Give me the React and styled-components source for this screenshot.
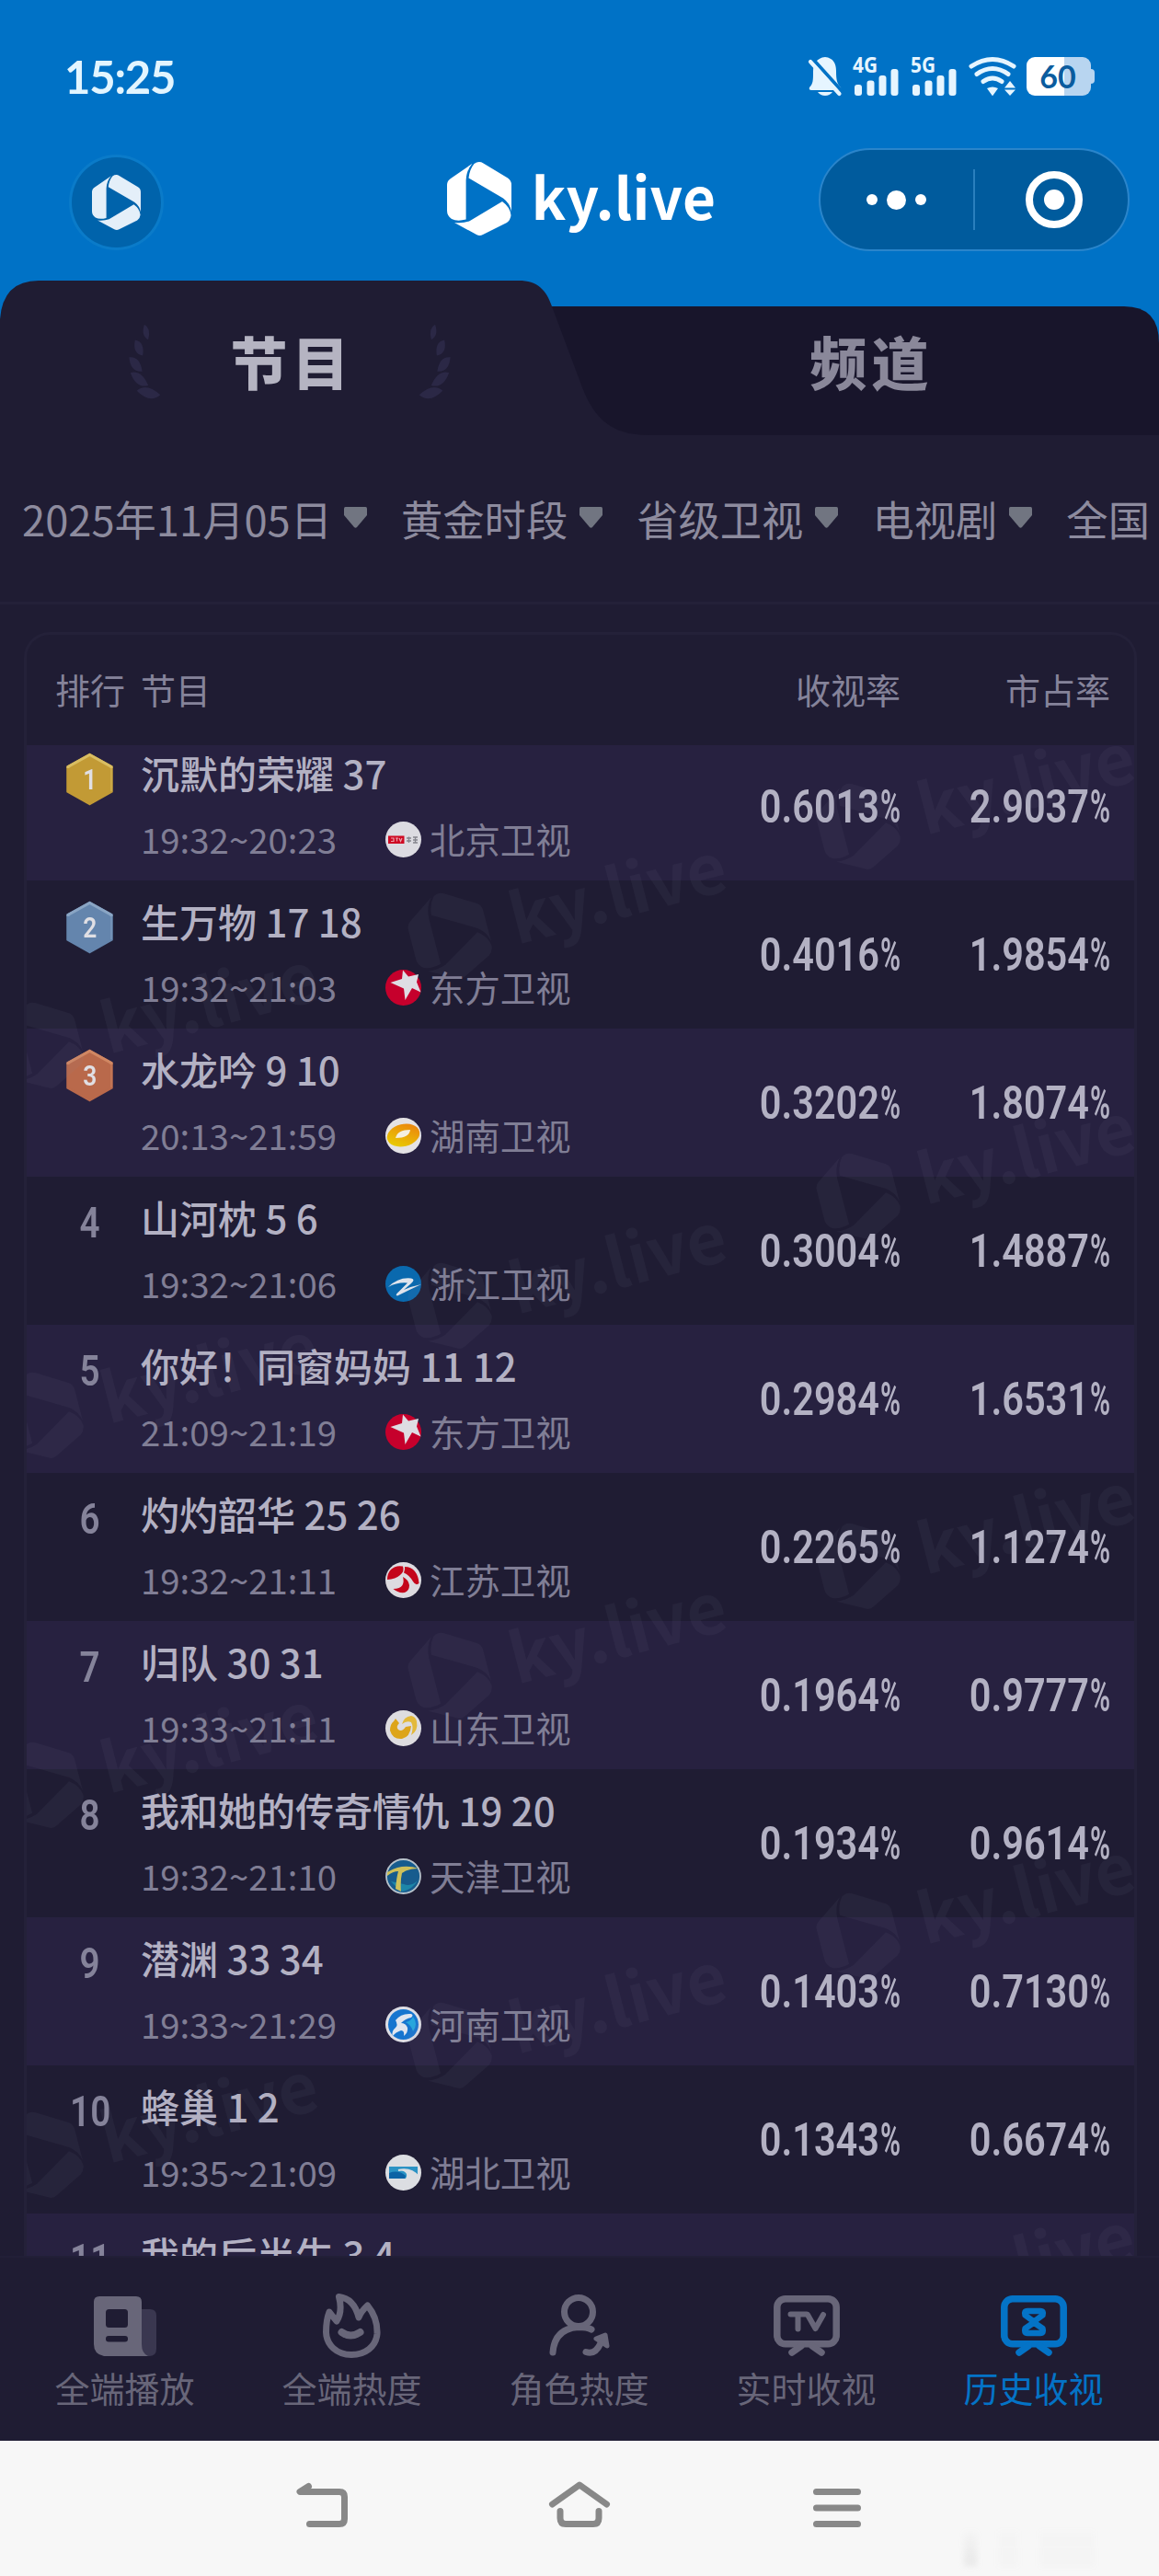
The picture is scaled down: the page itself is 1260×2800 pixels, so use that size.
import React from "react";
import styled, { createGlobalStyle } from "styled-components";

const CJK = `"Noto Sans CJK SC", "Noto Sans", sans-serif`;

const GlobalStyle = createGlobalStyle`
  body { margin: 0; background: #1f1c33; }
  * { box-sizing: border-box; }
  svg { display: block; flex: none; overflow: visible; }
`;

const Screen = styled.div`
  width: 1260px;
  height: 2800px;
  display: flex;
  flex-direction: column;
  overflow: hidden;
  background: #1f1c33;
  font-family: ${CJK};
  color: #8b899c;
`;

/* ---------- top area ---------- */

const Top = styled.header`
  height: 305px;
  flex: none;
  background: #0072c6;
  display: flex;
  flex-direction: column;
`;

const StatusBar = styled.div`
  height: 161px;
  padding: 62px 70px 0 70px;
  display: flex;
  justify-content: space-between;
  align-items: flex-start;
`;

const Clock = styled.div`
  font: 700 49px/42px Lato, sans-serif;
  color: #e2f5ff;
  letter-spacing: -1.2px;
`;

const StatusIcons = styled.div`
  display: flex;
  align-items: flex-start;
`;

const StatusSlot = styled.div`
  width: ${(p) => p.$w}px;
  margin-right: ${(p) => p.$gap || 0}px;
`;

const Battery = styled.div`
  position: relative;
  width: 70px;
  height: 42px;
  margin-right: 4px;
  border-radius: 9px;
  background: linear-gradient(90deg, #ffffff 41px, #b8d5f0 41px);
  color: #0b5c9e;
  font: 700 34px/42px Lato, sans-serif;
  text-align: center;
  padding-right: 2px;
  &::after {
    content: "";
    position: absolute;
    left: 70px;
    top: 13px;
    width: 4px;
    height: 16px;
    border-radius: 0 4px 4px 0;
    background: #b8d5f0;
  }
`;

const TitleBar = styled.div`
  height: 144px;
  display: grid;
  grid-template-columns: 1fr auto 1fr;
  align-items: start;
  padding: 0 32px 0 75px;
`;

const RoundButton = styled.div`
  width: 103px;
  height: 104px;
  margin-top: 7px;
  border: 3px solid #0a7bc9;
  border-radius: 50%;
  background: #0063ab;
  display: grid;
  place-items: center;
  color: #e4eff9;
`;

const BrandRow = styled.div`
  display: flex;
  align-items: center;
  gap: 22px;
  color: ${(p) => p.$color || "#ffffff"};
`;

const BrandSlot = styled.div`
  padding: 15px 39px 0 0;
`;

const BrandName = styled.span`
  font: 700 62px/80px ${CJK};
  letter-spacing: 0.2px;
  position: relative;
  top: -4px;
`;

const Capsule = styled.div`
  justify-self: end;
  width: 338px;
  height: 112px;
  border: 2px solid #2a85cb;
  border-radius: 56px;
  background: #005b9d;
  display: flex;
  align-items: center;
`;

const Dots = styled.div`
  width: 168px;
  height: 66px;
  padding-left: 50px;
  border-right: 2px solid #2a7fbd;
  display: flex;
  align-items: center;
  gap: 10px;
`;

const Dot = styled.i`
  width: ${(p) => p.$size}px;
  height: ${(p) => p.$size}px;
  border-radius: 50%;
  background: #fff;
`;

const Target = styled.div`
  margin-left: 55px;
  width: 62px;
  height: 62px;
  border: 8.5px solid #fff;
  border-radius: 50%;
  display: grid;
  place-items: center;
`;

/* ---------- tabs ---------- */

const Tabs = styled.nav`
  position: relative;
  flex: none;
  height: 168px;
  background: #0072c6;
  display: grid;
  grid-template-columns: 1fr 1fr;
`;

const TabShape = styled.svg`
  position: absolute;
  inset: 0;
`;

const Tab = styled.div`
  position: relative;
  height: 178px;
  display: flex;
  justify-content: center;
  align-items: center;
  gap: 76px;
  font: 900 62px/80px ${CJK};
  color: ${(p) => (p.$active ? "#b5b4c2" : "#8a889a")};
`;

const TabText = styled.span`
  letter-spacing: 5px;
  margin-right: -5px;
  position: relative;
  top: -2px;
`;

/* ---------- filters ---------- */

const Filters = styled.div`
  flex: none;
  height: 184px;
  padding: 0 0 2px 24px;
  border-bottom: 3px solid #242139;
  display: flex;
  align-items: center;
  gap: 37.5px;
  overflow: hidden;
`;

const Filter = styled.div`
  flex: none;
  display: flex;
  align-items: center;
  gap: 12.5px;
  font-size: 45.3px;
  line-height: 60px;
  white-space: nowrap;
  color: #8d8b9e;
`;

/* ---------- ranking panel ---------- */

const Panel = styled.section`
  flex: 1;
  min-height: 0;
  margin: 30px 24px 0 26px;
  border: 3px solid #242139;
  border-bottom: 0;
  border-radius: 28px 28px 0 0;
  display: flex;
  flex-direction: column;
`;

const columns = `96px 1fr 230px 228px 26px`;

const PanelHead = styled.div`
  flex: none;
  height: 120px;
  padding: 0 0 4px 28px;
  display: grid;
  grid-template-columns: ${columns};
  align-items: center;
  font-size: 38px;
  color: #85839a;
`;

const HeadCell = styled.div`
  text-align: ${(p) => (p.$right ? "right" : "left")};
  padding-left: ${(p) => p.$pad || 0}px;
`;

const PanelBody = styled.div`
  position: relative;
  flex: 1;
  min-height: 0;
  overflow: hidden;
`;

const Rows = styled.div`
  margin-top: -14px;
`;

const Row = styled.div`
  height: 161px;
  padding-left: 28px;
  display: grid;
  grid-template-columns: ${columns};
  background: ${(p) => (p.$odd ? "#272140" : "#1f1c33")};
`;

const RankCell = styled.div`
  padding: 22px 0 0 15px;
`;

const RankNumber = styled.div`
  width: 51px;
  height: 57px;
  text-align: center;
  font: 600 46px/57px Roboto, sans-serif;
  color: #85839a;
  transform: scaleX(0.84);
`;

const BadgeBox = styled.div`
  width: 51px;
  height: 57px;
  display: grid;
  place-items: center;
  > * { grid-area: 1 / 1; }
`;

const BadgeNumber = styled.span`
  font: 600 31px/57px Roboto, sans-serif;
  color: #e0dfe4;
  transform: scaleX(0.85);
`;

const Program = styled.div`
  padding-top: 14px;
  display: flex;
  flex-direction: column;
`;

const ProgramTitle = styled.div`
  font-size: 42px;
  font-weight: 500;
  line-height: 60px;
  color: #b3b1c3;
  white-space: nowrap;
`;

const ProgramMeta = styled.div`
  height: 56px;
  margin-top: 14px;
  display: flex;
  align-items: center;
  font-size: 38.4px;
  line-height: 52px;
  white-space: nowrap;
  color: #807e95;
`;

const Time = styled.span`
  position: relative;
  top: -1.5px;
  width: 266px;
`;

const ChannelName = styled.span`
  position: relative;
  top: -1.5px;
  margin-left: 9px;
`;

const Figure = styled.div`
  height: 161px;
  display: flex;
  justify-content: flex-end;
  align-items: center;
  font: 600 50px/60px Roboto, sans-serif;
  color: #b3b1c3;
  white-space: nowrap;
`;

const Digits = styled.span`
  transform: scaleX(0.83);
  transform-origin: right center;
`;

const Percent = styled.span`
  width: 22px;
  margin-left: 1px;
  transform: scaleX(0.6);
  transform-origin: left center;
`;

const Watermark = styled.div`
  position: absolute;
  left: ${(p) => p.$x}px;
  top: ${(p) => p.$y}px;
  width: 0;
  height: 0;
  display: flex;
  align-items: center;
  justify-content: center;
  transform: rotate(-14.5deg) scale(1.2);
  opacity: 0.068;
  pointer-events: none;
`;

/* ---------- bottom bars ---------- */

const BottomNav = styled.nav`
  flex: none;
  height: 201px;
  padding: 0 13px 0 12px;
  border-top: 2px solid #221f37;
  display: grid;
  grid-template-columns: repeat(5, 1fr);
`;

const NavItem = styled.div`
  padding-top: 36px;
  display: flex;
  flex-direction: column;
  align-items: center;
  color: ${(p) => (p.$active ? "#0473c6" : "#686679")};
  font-size: 38px;
  line-height: 56px;
`;

const NavIconBox = styled.div`
  height: 76px;
  display: grid;
  place-items: center;
`;

const NavLabel = styled.span`
  margin-top: 1px;
`;

const SystemNav = styled.footer`
  flex: none;
  height: 147px;
  background: #f7f7f7;
  display: flex;
  padding: 43px 0 0 320px;
  color: #888;
  position: relative;
`;

const SystemSlot = styled.div`
  width: ${(p) => p.$w}px;
`;

const Smudge = styled.i`
  position: absolute;
  left: ${(p) => p.$x}px;
  top: 98px;
  width: ${(p) => p.$w}px;
  height: 38px;
  filter: blur(3px);
  background: linear-gradient(rgba(150, 150, 150, 0.02), rgba(150, 150, 150, ${(p) => p.$a}));
`;

/* ---------- drawings ---------- */

const Mark = ({ w, h }) => (
  <svg width={w} height={h} viewBox="0 0 70 80" preserveAspectRatio="none" fill="currentColor">
    <path d="M0 25Q0 20.5 4 18L27.5 1.8Q21 9 20.6 20V62.5Q11 65 5 62Q0 58.500 0 53Z" />
    <path d="M29.500 2Q34.500-1.500 39.500 1.500L66 17.500Q70 20 70 25V54Q68.500 45 61 39.500L23.500 17.500Q24.500 8 29.500 2Z" />
    <path d="M60 43Q68.500 49 69.500 58Q69 63 65 66L39 79Q35.500 81 32 79L8 66Q17 67 24.500 64.300Z" />
  </svg>
);

const Brand = ({ color }) => (
  <BrandRow $color={color}>
    <Mark w={70} h={80} />
    <BrandName>ky.live</BrandName>
  </BrandRow>
);

const Bell = () => (
  <svg width="36" height="42" viewBox="0 0 36 42">
    <path d="M18 0C27 1 30 7 30 15C30 25 31 29 35 33Q36 36 33 36H3Q0 36 1 33C5 29 5 25 5 16C5 7 9 1 18 0Z" fill="#e6f5ff" />
    <path d="M10 38H26Q23 42 18 42Q13 42 10 38Z" fill="#e6f5ff" />
    <path d="M4.500 2L37 38" stroke="#0072c6" strokeWidth="4" />
    <path d="M2 5L33.500 40" stroke="#e6f5ff" strokeWidth="4.200" strokeLinecap="round" />
  </svg>
);

const Signal = ({ label }) => (
  <svg width="50" height="42" viewBox="0 0 50 42" fill="#e6f5ff">
    <text x="0" y="17" fontFamily="Open Sans, sans-serif" fontWeight="700" fontSize="23.500" textLength="27" lengthAdjust="spacingAndGlyphs">{label}</text>
    <rect x="2" y="30" width="8" height="12" rx="3" />
    <rect x="15.500" y="25.500" width="8" height="16.500" rx="3" />
    <rect x="28.500" y="20" width="8" height="22" rx="3" />
    <rect x="41.500" y="13" width="8" height="29" rx="3" />
  </svg>
);

const Wifi = () => (
  <svg width="52" height="42" viewBox="0 0 52 42">
    <g fill="none" stroke="#e6f5ff" strokeWidth="5" strokeLinecap="round">
      <path d="M3 10Q26-5 49 10" />
      <path d="M9 18.500Q26 6.500 43 18.500" />
      <path d="M16 26.500Q26 19.500 36 26.500" />
    </g>
    <path d="M20 34Q26 31 32 34L27 41Q26 43 25 41Z" fill="#e6f5ff" />
    <path d="M39 33.500L45 26L51 33.500ZM39 35.500H51L45 42Z" fill="#e6f5ff" />
  </svg>
);

const leaves = [
  { x: 19, y: 7, r: 76, l: 8.5, t: 4 },
  { x: 11, y: 24, r: 64, l: 9.5, t: 5.5 },
  { x: 7.5, y: 42, r: 47, l: 10.5, t: 6 },
  { x: 11.5, y: 58, r: 36, l: 12, t: 6.2 },
  { x: 21.5, y: 73, r: 10, l: 13, t: 6.8 },
];

const Laurel = ({ flip }) => (
  <svg width="34" height="80" viewBox="0 0 34 80" fill="#2b2846" transform={flip ? "scale(-1 1)" : undefined}>
    {leaves.map((f) => (
      <path
        key={f.y}
        transform={`translate(${f.x} ${f.y}) rotate(${f.r})`}
        d={`M${-f.l} 0Q${-f.l / 3} ${-f.t * 1.6} ${f.l} 0Q${f.l / 4} ${f.t * 1.7} ${-f.l} 0Z`}
      />
    ))}
  </svg>
);

const Caret = () => (
  <svg width="25" height="23" viewBox="0 0 25 23">
    <path d="M1.500 0H23.500Q25 0 25 2V9L14 22Q12.500 23.500 11 22L0 9V2Q0 0 1.500 0Z" fill="#717581" />
  </svg>
);

const badgeColors = {
  1: ["#c29a35", "#d9bd62"],
  2: ["#6485ad", "#8aa5c4"],
  3: ["#b9694b", "#d08763"],
};

const Badge = ({ n }) => (
  <BadgeBox>
    <svg width="51" height="58" viewBox="0 0 51 58">
      <path d="M25.500 2L49.500 15.500V42.500L25.500 56L1.500 42.500V15.500Z" fill={badgeColors[n][0]} stroke={badgeColors[n][0]} strokeWidth="2.500" strokeLinejoin="round" />
      <path d="M2 17V15.500L25.500 2.500L49 15.500V17" fill="none" stroke={badgeColors[n][1]} strokeWidth="3" />
      <path d="M49 17V42" stroke={badgeColors[n][1]} strokeWidth="1.200" opacity=".7" />
    </svg>
    <BadgeNumber>{n}</BadgeNumber>
  </BadgeBox>
);

const channelArt = {
  北京卫视: (
    <>
      <circle cx="19.500" cy="19.500" r="19.500" fill="#dcdbe1" />
      <rect x="3" y="15.500" width="17.500" height="8.500" fill="#cf0a23" />
      <path d="M6 18H9V21.500H6M11 18H14M12.500 18V21.500M15 18L16.500 21.500L18 18" stroke="#eaa0aa" strokeWidth="1.200" fill="none" />
      <path d="M23 18H28M25.500 16.500V23M23 21H28M30 17H35M30 20H35M30 23H35M32.500 17V23" stroke="#85858d" strokeWidth="1.300" fill="none" />
    </>
  ),
  东方卫视: (
    <>
      <circle cx="19.500" cy="19.500" r="19.500" fill="#c6002c" />
      <path d="M19 .5L25 7.500L36 5L34 13.500L38.500 24.500L29 20L21.500 33L20 20.500L5.500 14L18 10Z" fill="#dedde3" />
    </>
  ),
  湖南卫视: (
    <>
      <circle cx="19.500" cy="19.500" r="19.500" fill="#e4e2e4" />
      <defs>
        <linearGradient id="mango" x1="0" y1="1" x2="1" y2="0">
          <stop offset="0" stopColor="#e8d800" />
          <stop offset="1" stopColor="#ec7a10" />
        </linearGradient>
      </defs>
      <ellipse cx="19.500" cy="19" rx="18" ry="12" transform="rotate(-14 19.500 19)" fill="url(#mango)" />
      <path d="M11 22Q13 13 27 13Q26 22 11 22Z" fill="#f4efe0" />
    </>
  ),
  浙江卫视: (
    <>
      <circle cx="19.500" cy="19.500" r="19.500" fill="#0a69ae" />
      <path d="M3 23Q14 12 28 13.500Q33 14.500 28 19L20 26Q29 22 39 20Q26 26 13 32.500Q10 32 14 28.500L24 18.500Q13 17.500 3 23Z" fill="#dfe4ec" />
    </>
  ),
  江苏卫视: (
    <>
      <circle cx="19.500" cy="19.500" r="19.500" fill="#dddbe0" />
      <path d="M6 8Q11 3 19 4.500Q21 10 16 14Q11 18.500 2 19Q2 12 6 8Z" fill="#c4061b" />
      <path d="M21 5Q28 5 32 10Q36 15 36.500 23Q33 26 30 21Q26 14 20 11.500Q21.500 8 21 5Z" fill="#c4061b" />
      <path d="M19 16Q25 19 26 25Q26 31 21 33Q14 34 8.500 29Q16 29 18.500 25Q20.500 21 19 16Z" fill="#c4061b" />
    </>
  ),
  山东卫视: (
    <>
      <circle cx="19.500" cy="19.500" r="19.500" fill="#dedde0" />
      <path d="M5 22Q5 15 9 12L11 9L15 14Q11 18 14 21Q18 24 22 18L28 17Q27 29 18 31Q8 32 5 22Z" fill="#dda51b" />
      <path d="M18 15Q20 7 28 6Q33 7 34 12Q36 22 28 27Q31 18 28 13Q23 11 18 15Z" fill="#e3b93a" />
    </>
  ),
  天津卫视: (
    <>
      <circle cx="19.500" cy="19.500" r="18.500" fill="#175c8e" stroke="#b6c2cb" strokeWidth="1.800" />
      <path d="M6 25Q14 34 19 36Q30 33 35 24Q28 31 20 28Z" fill="#1d86a8" />
      <path d="M2 15Q18 5 36 11Q25 11 18 16Q16 25 17 36L11 33Q12 21 14 14Q8 14 2 19Z" fill="#cfc05a" />
    </>
  ),
  河南卫视: (
    <>
      <circle cx="19.500" cy="19.500" r="19.500" fill="#dddde4" />
      <circle cx="19.500" cy="19.500" r="16.500" fill="#1675cf" />
      <path d="M11 15Q17 7 28 8Q31 9 28 12Q22 13 17 18Q22 18 24 23Q25 28 20 32Q21 26 17 26Q11 28 8 32Q6 27 11 23Q14 20 11 15Z" fill="#dfe5ef" />
      <path d="M30 11Q36 19 30 27Q28 20 22 17Q28 16 30 11Z" fill="#27a6dc" />
    </>
  ),
  湖北卫视: (
    <>
      <circle cx="19.500" cy="19.500" r="19.500" fill="#dcdee2" />
      <path d="M4 13H35V22Q26 15 16 17Q26 19 22 26H4Z" fill="#2b93c4" />
      <path d="M4 20Q14 16 22 23L21 26H4Z" fill="#0d63a5" />
      <path d="M14 17Q28 14 36 24" stroke="#dcdee2" strokeWidth="2" fill="none" />
    </>
  ),
};

const ChannelLogo = ({ name }) => (
  <svg width="39" height="39" viewBox="0 0 39 39">{channelArt[name]}</svg>
);

const NewsIcon = () => (
  <svg width="68" height="65" viewBox="0 0 68 65">
    <path d="M52 14H61Q68 14 68 21V57Q68 65 60 65H52Z" fill="#3a3750" />
    <path d="M6 0H46Q52 0 52 6V52Q52 62 59 65H11Q0 63 0 52V6Q0 0 6 0Z" fill="currentColor" />
    <rect x="13" y="14" width="24" height="20" rx="3.500" fill="#1f1c33" />
    <rect x="13" y="43" width="24" height="6.500" rx="3" fill="#1f1c33" />
  </svg>
);

const FlameIcon = () => (
  <svg width="63" height="70" viewBox="0 0 63 70" fill="none" stroke="currentColor" strokeWidth="7" strokeLinecap="round" strokeLinejoin="round">
    <path d="M17.500 3.500C30 5 36 14 39 26Q41 20 48.500 13C56 22 59.500 33 59 44C57.500 58 46 66.500 31 66.500C15 66.500 4 56 3.500 42Q3.500 29 7 20Q10 24 15 30C20 22 20 13 17.500 3.500Z" />
    <path d="M20.500 42Q30 49 40.500 42" strokeWidth="8" />
  </svg>
);

const RoleIcon = () => (
  <svg width="66" height="68" viewBox="0 0 66 68" fill="none" stroke="currentColor" strokeWidth="7" strokeLinecap="round">
    <ellipse cx="32" cy="19" rx="15.500" ry="15.500" />
    <path d="M4 63Q6 37 32 35.500Q41 35.500 46 38" />
    <path d="M40 62.500Q50 66 56 53" />
    <path d="M51 48L61 44L63 56Z" fill="currentColor" strokeWidth="5" strokeLinejoin="round" />
  </svg>
);

const TvFrame = ({ children }) => (
  <svg width="72" height="66" viewBox="0 0 72 66" fill="none" stroke="currentColor" strokeWidth="7.500" strokeLinecap="round" strokeLinejoin="round">
    <rect x="3.800" y="3.800" width="64.400" height="49" rx="9" />
    <path d="M30 55L20 62M42 55L52 62" />
    {children}
  </svg>
);

const TvIcon = () => (
  <TvFrame>
    <path d="M18.500 20.500H36M26.500 21V36.500M37 21L45.500 36L54 21" strokeWidth="6" />
  </TvFrame>
);

const HistoryIcon = () => (
  <TvFrame>
    <path d="M29 17H43Q47 17 45.500 21.500L36 28.500L26.500 21.500Q25 17 29 17ZM36 29.500L45.500 36Q47 41 43 41H29Q25 41 26.500 36Z" strokeWidth="6.500" />
  </TvFrame>
);

const sysStroke = { fill: "none", stroke: "currentColor", strokeWidth: 7, strokeLinecap: "round", strokeLinejoin: "round" };

const BackIcon = () => (
  <svg width="60" height="52" viewBox="0 0 60 52" {...sysStroke}>
    <path d="M15.500 6.500L6 12.500H49Q54.500 12.500 54.500 18V42Q54.500 47.500 49 47.500H16.500" />
  </svg>
);

const HomeIcon = () => (
  <svg width="68" height="52" viewBox="0 0 68 52" {...sysStroke}>
    <path d="M4.500 26L34 5L63.500 26M13 33.500V41Q13 47.500 19 47.500H49Q55 47.500 55 41V33.500" />
  </svg>
);

const MenuIcon = () => (
  <svg width="52" height="52" viewBox="0 0 52 52" {...sysStroke}>
    <path d="M3.500 12.500H48.500M3.500 30H48.500M3.500 47.500H48.500" />
  </svg>
);

/* ---------- data ---------- */

const filters = ["2025年11月05日", "黄金时段", "省级卫视", "电视剧", "全国"];

const programs = [
  ["沉默的荣耀 37", "19:32~20:23", "北京卫视", "0.6013", "2.9037"],
  ["生万物 17 18", "19:32~21:03", "东方卫视", "0.4016", "1.9854"],
  ["水龙吟 9 10", "20:13~21:59", "湖南卫视", "0.3202", "1.8074"],
  ["山河枕 5 6", "19:32~21:06", "浙江卫视", "0.3004", "1.4887"],
  ["你好！同窗妈妈 11 12", "21:09~21:19", "东方卫视", "0.2984", "1.6531"],
  ["灼灼韶华 25 26", "19:32~21:11", "江苏卫视", "0.2265", "1.1274"],
  ["归队 30 31", "19:33~21:11", "山东卫视", "0.1964", "0.9777"],
  ["我和她的传奇情仇 19 20", "19:32~21:10", "天津卫视", "0.1934", "0.9614"],
  ["潜渊 33 34", "19:33~21:29", "河南卫视", "0.1403", "0.7130"],
  ["蜂巢 1 2", "19:35~21:09", "湖北卫视", "0.1343", "0.6674"],
  ["我的后半生 3 4"],
];

const watermarks = [0, 1, 2, 3, 4].flatMap((k) => [
  { x: 1033, y: 55 + k * 402 },
  { x: 589, y: 174 + k * 402 },
  { x: 145, y: 293 + k * 402 },
]);

const navItems = [
  ["全端播放", NewsIcon],
  ["全端热度", FlameIcon],
  ["角色热度", RoleIcon],
  ["实时收视", TvIcon],
  ["历史收视", HistoryIcon],
];

const Rate = ({ value }) => (
  <Figure>
    <Digits>{value}</Digits>
    <Percent>%</Percent>
  </Figure>
);

const ProgramRow = ({ rank, data }) => {
  const [title, time, channel, rating, share] = data;
  return (
    <Row $odd={rank % 2 === 1}>
      <RankCell>{rank <= 3 ? <Badge n={rank} /> : <RankNumber>{rank}</RankNumber>}</RankCell>
      <Program>
        <ProgramTitle>{title}</ProgramTitle>
        {time && (
          <ProgramMeta>
            <Time>{time}</Time>
            <ChannelLogo name={channel} />
            <ChannelName>{channel}</ChannelName>
          </ProgramMeta>
        )}
      </Program>
      {rating && <Rate value={rating} />}
      {share && <Rate value={share} />}
    </Row>
  );
};

export default function App() {
  return (
    <Screen>
      <GlobalStyle />
      <Top>
        <StatusBar>
          <Clock>15:25</Clock>
          <StatusIcons>
            <StatusSlot $w={36} $gap={12}><Bell /></StatusSlot>
            <StatusSlot $w={50} $gap={13}><Signal label="4G" /></StatusSlot>
            <StatusSlot $w={50} $gap={13}><Signal label="5G" /></StatusSlot>
            <StatusSlot $w={52} $gap={11}><Wifi /></StatusSlot>
            <Battery>60</Battery>
          </StatusIcons>
        </StatusBar>
        <TitleBar>
          <RoundButton><Mark w={53} h={60} /></RoundButton>
          <BrandSlot><Brand /></BrandSlot>
          <Capsule>
            <Dots>
              <Dot $size={12} />
              <Dot $size={21} />
              <Dot $size={12} />
            </Dots>
            <Target><Dot $size={22} /></Target>
          </Capsule>
        </TitleBar>
      </Top>

      <Tabs>
        <TabShape width="1260" height="168" viewBox="0 0 1260 168">
          <path d="M560 28H1222Q1260 28 1260 68V168H560Z" fill="#18152b" />
          <path d="M0 169V42Q3 0 42 0H564C584 0 594 10 600 28L630 108C644 148 662 168 706 168V169Z" fill="#1f1c33" />
        </TabShape>
        <Tab $active>
          <Laurel />
          <TabText>节目</TabText>
          <Laurel flip />
        </Tab>
        <Tab><TabText>频道</TabText></Tab>
      </Tabs>

      <Filters>
        {filters.map((f) => (
          <Filter key={f}>{f}<Caret /></Filter>
        ))}
      </Filters>

      <Panel>
        <PanelHead>
          <HeadCell $pad={3}>排行</HeadCell>
          <HeadCell>节目</HeadCell>
          <HeadCell $right>收视率</HeadCell>
          <HeadCell $right>市占率</HeadCell>
        </PanelHead>
        <PanelBody>
          <Rows>
            {programs.map((p, i) => (
              <ProgramRow key={p[0]} rank={i + 1} data={p} />
            ))}
          </Rows>
          {watermarks.map((w) => (
            <Watermark key={`${w.x}-${w.y}`} $x={w.x} $y={w.y}><Brand color="#8d8fa8" /></Watermark>
          ))}
        </PanelBody>
      </Panel>

      <BottomNav>
        {navItems.map(([label, Icon], i) => (
          <NavItem key={label} $active={i === 4}>
            <NavIconBox><Icon /></NavIconBox>
            <NavLabel>{label}</NavLabel>
          </NavItem>
        ))}
      </BottomNav>

      <SystemNav>
        <SystemSlot $w={276}><BackIcon /></SystemSlot>
        <SystemSlot $w={288}><HomeIcon /></SystemSlot>
        <MenuIcon />
        <Smudge $x={1048} $w={14} $a={0.15} />
        <Smudge $x={1085} $w={22} $a={0.03} />
        <Smudge $x={1130} $w={60} $a={0.03} />
      </SystemNav>
    </Screen>
  );
}
